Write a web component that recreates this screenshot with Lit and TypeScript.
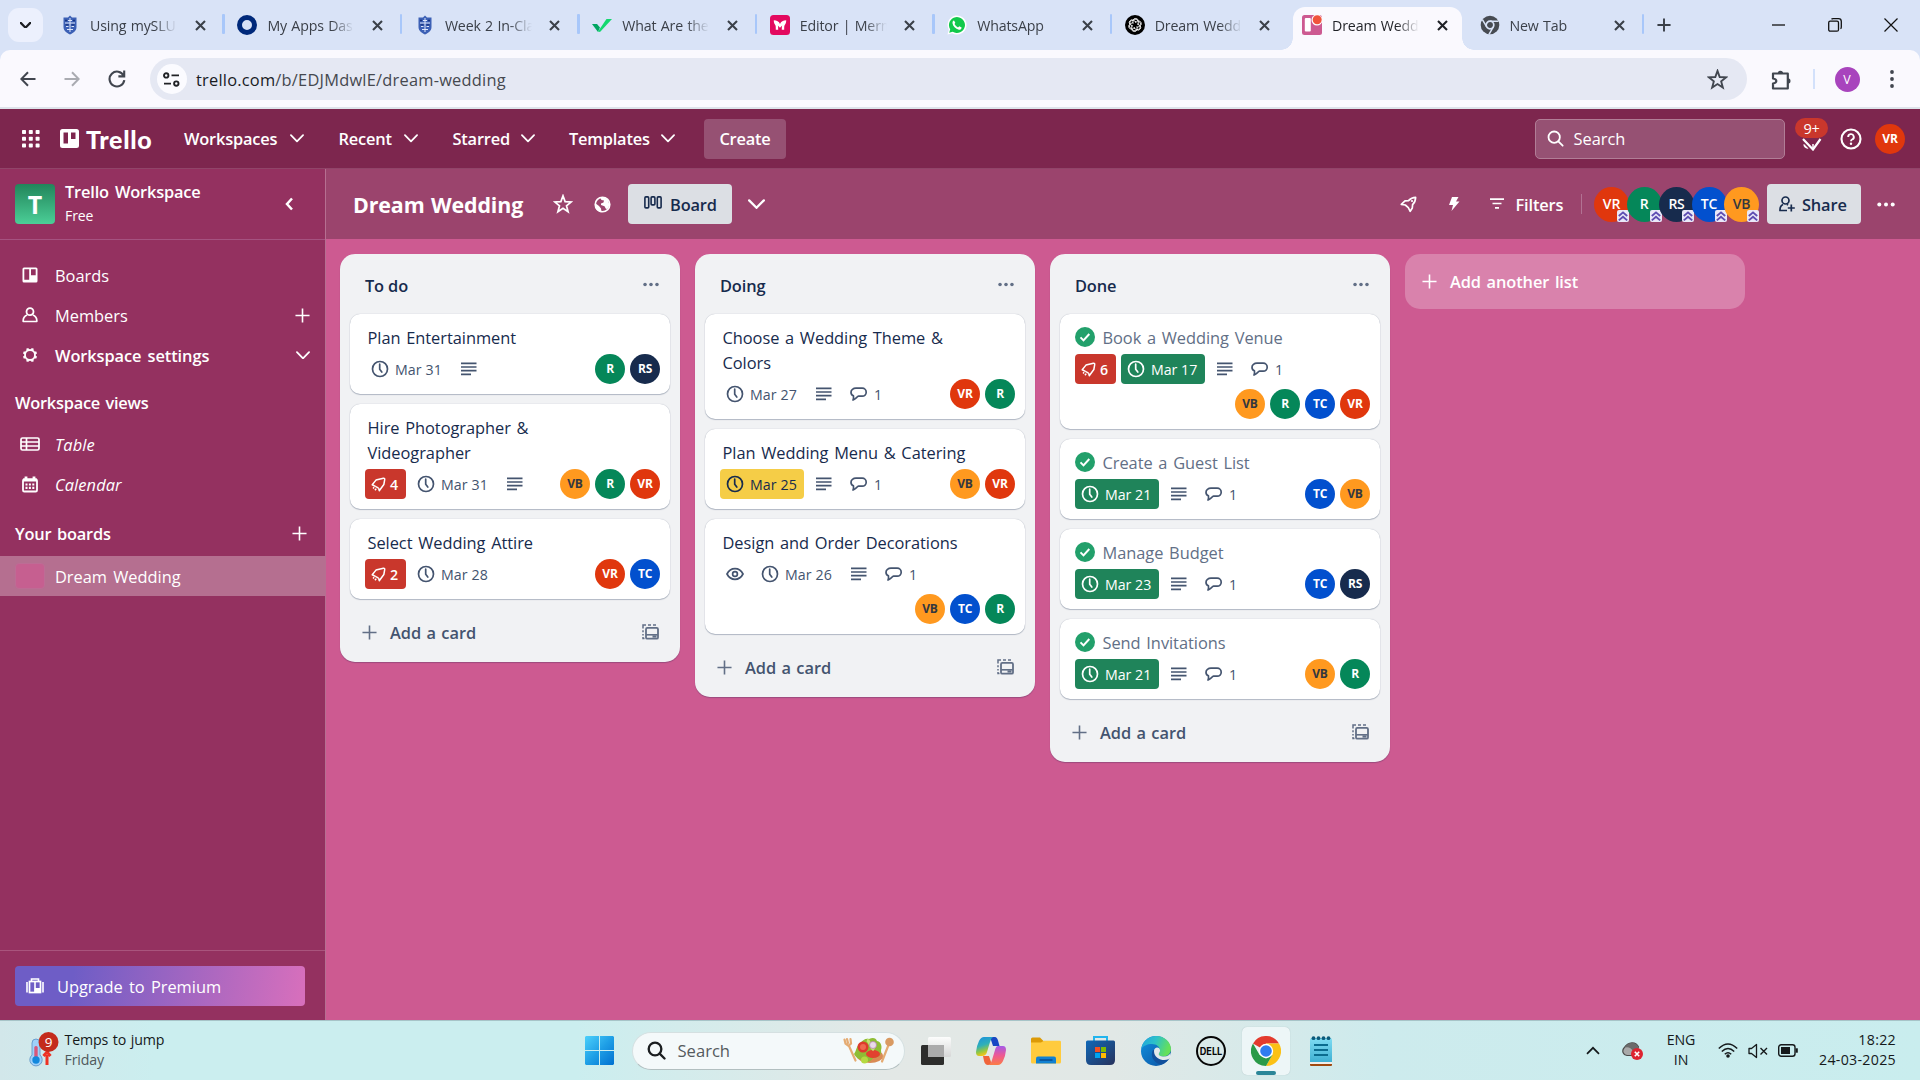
import { LitElement, html, css, svg, nothing, TemplateResult } from "lit";
import { customElement, property } from "lit/decorators.js";
import { classMap } from "lit/directives/class-map.js";

type Pic = TemplateResult;

const icon = (w: number, h: number, vb: string, body: unknown, cls = ""): Pic => html`<svg
  class="ico ${cls}" width=${w} height=${h} viewBox=${vb} fill="none" stroke="currentColor"
>${body}</svg>`;

const chevronDown = (w = 15, s = 2) =>
  icon(w, w * 0.6, "0 0 15 9", svg`<path d="M1 1.2 7.5 7.8 14 1.2" stroke-width=${s} stroke-linecap="round" stroke-linejoin="round"/>`);
const plus = (size: number, s = 2) =>
  icon(size, size, "0 0 16 16", svg`<path d="M8 .5v15M.5 8h15" stroke-width=${s}/>`);
const dots = (w: number) =>
  icon(w, 5, "0 0 18 5", svg`<g fill="currentColor" stroke="none"><circle cx="2.3" cy="2.5" r="2"/><circle cx="9" cy="2.5" r="2"/><circle cx="15.7" cy="2.5" r="2"/></g>`);
const star = (size: number, s = 1.8) =>
  icon(size, size, "0 0 20 20", svg`<path d="M10 1.8 12.1 7.600 18.3 7.9 13.5 11.8 15.1 17.7 10 14.3 4.9 17.7 6.5 11.8 1.7 7.9 7.9 7.600Z" stroke-width=${s} stroke-linejoin="miter"/>`);
const clock = icon(20, 20, "0 0 20 20", svg`<circle cx="10" cy="10" r="7.5" stroke-width="1.7"/><path d="M9.7 5.2V10.3L11.8 13" stroke-width="1.7" stroke-linecap="round"/>`);
const lines = icon(16, 14, "0 0 16 14", svg`<path d="M0 1.3h15.5M0 5h15.5M0 8.7h15.5M0 12.4h10" stroke-width="1.7"/>`);
const bubble = icon(20, 20, "0 0 20 20", svg`<path d="M7 4.2h6.2a4 4 0 0 1 0 8H9.6C8 12.4 7.2 14.6 4 16c.8-1.700.6-3.300.4-4.200C2.300 10.900 2 9.300 2 8.200 2 5.800 4.200 4.200 7 4.200Z" stroke-width="1.700" stroke-linejoin="round"/>`);
const eye = icon(20, 20, "0 0 20 20", svg`<path d="M2 10c1.600-3.200 4.400-5.300 8-5.300s6.400 2.100 8 5.300c-1.600 3.200-4.400 5.300-8 5.300S3.600 13.200 2 10Z" stroke-width="1.700"/><circle cx="10" cy="10" r="2.400" stroke-width="1.700"/>`);
const rocket = (s: number) => icon(s, s, "0 0 16 16", svg`<path d="M5.200 10.300 1.300 8.300 5.300 3.300 13.200 1.300Q14.900 1 14.600 2.800L13.700 8 8.800 14.600 8.100 11.800" stroke-width="1.600" stroke-linejoin="round"/><path d="M5.200 10.300l2.900 1.500M3.300 11l-1.100 1.300M5.600 12.400l-1.400 1.700" stroke-width="1.600"/>`);
const launch = icon(17, 17, "0 0 17 17", svg`<path d="M1.300 8.300 5 4.900 8.500 4.600Q11.500 1.300 15.600 1.300 15.700 5.500 12.600 8.700L12.300 12 10.200 15.400 8.300 11.600 5.300 9Z" stroke-width="1.700" stroke-linejoin="round"/><circle cx="12" cy="5" r="1.100" fill="currentColor" stroke="none"/>`);
const template = icon(17, 17, "0 0 17 17", svg`<path d="M1 11.500V10M1 8.200V6.200M1 4.500V1H4M6 1h3M11 1h3M1 13v1.500h1.500" stroke-width="1.500"/><rect x="4" y="3.900" width="12" height="10.800" rx="1.300" stroke-width="1.800"/><path d="M4 10.800h12" stroke-width="1.600"/><path d="M10.500 12.500h4" stroke-width="2.200"/>`);
const doneCheck = html`<svg class="ico" width="20" height="20" viewBox="0 0 20 20"><circle cx="10" cy="10" r="10" fill="#22a06b"/><path d="M5.500 10.400 8.500 13.400 14.300 7" fill="none" stroke="#fff" stroke-width="2"/></svg>`;
const boardGlyph = (s: number) => html`<svg class="ico" width=${s} height=${s} viewBox="0 0 16 16"><path fill="currentColor" fill-rule="evenodd" d="M2 .500h12A1.500 1.500 0 0 1 15.500 2v12a1.500 1.500 0 0 1-1.500 1.500H2A1.500 1.500 0 0 1 .500 14V2A1.500 1.500 0 0 1 2 .500ZM2.300 2.200v10.600H7.200V2.200ZM9 2.200V8.300h4.700V2.200Z"/></svg>`;
const closeX = icon(11, 11, "0 0 11 11", svg`<path d="M1 1l9 9M10 1l-9 9" stroke-width="2.100"/>`);
const search = (s: number, w = 2) => icon(s, s, "0 0 18 18", svg`<circle cx="7.600" cy="7.600" r="6" stroke-width=${w}/><path d="M12 12l4.600 4.600" stroke-width=${w} stroke-linecap="round"/>`);

const shield = html`<svg class="ico" width="20" height="20" viewBox="0 0 20 20"><path d="M10 .500 12 2.500H16.500V12c0 4-3.500 6-6.500 7.500C7 18 3.500 16 3.500 12V2.500H8Z" fill="#3c60b5"/><path d="M5 8h10M10 3v14M6 11.500h2.500M11.500 11.500H14M7 14.500h6M8 5.500h4" stroke="#dde6fa" stroke-width="1"/><path d="M5 5.500h2M13 5.500h2M5.500 9.800h3M11.500 9.800h3" stroke="#16327f" stroke-width="1.300"/></svg>`;
const chromeMark = (s: number, a: string, b: string, c: string, hub: string, ring = "#fff") => html`<svg class="ico" width=${s} height=${s} viewBox="0 0 30 30">
  <path d="M15 15 2 7.500A15 15 0 0 1 28 7.500H15Z" fill=${a}/><path d="M15 7.500H28A15 15 0 0 1 15 30L21.500 18.500Z" fill=${c}/><path d="M2 7.500 8.500 18.700 15 22.500 21.500 18.700 15 30A15 15 0 0 1 2 7.500Z" fill=${b}/>
  <circle cx="15" cy="15" r="7.200" fill=${ring}/><circle cx="15" cy="15" r="5.800" fill=${hub}/></svg>`;
const chromeMono = html`<svg class="ico" width="20" height="20" viewBox="0 0 20 20"><circle cx="10" cy="10" r="9.300" fill="#474b52"/><circle cx="10" cy="10" r="3.800" fill="none" stroke="#d9e3f7" stroke-width="1.700"/><path d="M10 6.200H18.500M6.700 11.900 2.400 4.700M13.300 11.900 9 19.300" stroke="#d9e3f7" stroke-width="1.500"/></svg>`;

interface TabInfo { title: string; fav: Pic; active?: boolean; sep?: boolean; }

const tabs: TabInfo[] = [
  { title: "Using mySLU", sep: true, fav: html`<span class="white">${shield}</span>` },
  { title: "My Apps Das", sep: true, fav: icon(20, 20, "0 0 20 20", svg`<circle cx="10" cy="10" r="7.500" stroke="#00297a" stroke-width="5"/>`) },
  { title: "Week 2 In-Cla", sep: true, fav: shield },
  { title: "What Are the", sep: true, fav: html`<svg class="ico" width="20" height="20" viewBox="0 0 20 20"><path d="M0 9H5l3 3.500-2 4.500Z" fill="#00a562"/><path d="M6 16.500 14.500 4H20L8 17Z" fill="#13d86f"/></svg>` },
  { title: "Editor | Merm", sep: true, fav: html`<svg class="ico" width="20" height="20" viewBox="0 0 20 20"><rect width="20" height="20" rx="3.500" fill="#e3095f"/><path d="M3.800 5.300c3 0 5.200 1.200 6.200 3.700 1-2.500 3.200-3.700 6.200-3.700.1 2.500-.7 3.700-1.600 4.900-.4.700-.4 2-.4 4.600h-2.400c0-2.200 0-3.300.4-4.300L10 12.700 7.800 10.500c.4 1 .4 2.100.4 4.300H5.800c0-2.600 0-3.900-.4-4.600-.9-1.200-1.700-2.400-1.600-4.900Z" fill="#fff"/></svg>` },
  { title: "WhatsApp", sep: true, fav: html`<svg class="ico" width="20" height="20" viewBox="0 0 20 20"><path d="M.5 19.500 1.800 14.700A9.500 9.500 0 1 1 5.300 18.200Z" fill="#fff"/><path d="M2.200 17.800 3.200 14.300A8 8 0 1 1 5.700 16.800Z" fill="#12c94b"/><path d="M7 5.500 8.300 7.800 7.500 9q1.200 2.300 3.500 3.400l1.300-1.100 2.300 1.100c0 1.800-1.400 2.400-2.700 2.300C8.500 14 6 11.300 5.500 8.300 5.400 6.800 6 5.500 7 5.500Z" fill="#fff"/></svg>` },
  { title: "Dream Weddi", fav: html`<svg class="ico" width="20" height="20" viewBox="0 0 20 20"><circle cx="10" cy="10" r="10" fill="#000"/><g fill="none" stroke="#fff" stroke-width=".8">${[0, 60, 120, 180, 240, 300].map((a) => svg`<path transform="rotate(${a} 10 10)" d="M10 7.700 12.900 6a2.700 2.700 0 0 1 2.300 4.800L12 12.600M8.500 5.200a2.600 2.600 0 0 1 4.400.8"/>`)}</g></svg>` },
  { title: "Dream Weddi", active: true, fav: html`<svg class="ico" width="20" height="20" viewBox="0 0 20 20"><rect width="20" height="20" rx="2.500" fill="#cd5a91"/><rect x="2.800" y="3" width="6" height="13.500" rx="1" fill="#fff"/><circle cx="15" cy="5" r="5.500" fill="#fff"/><circle cx="15.200" cy="4.800" r="4.500" fill="#f0533c"/></svg>` },
  { title: "New Tab", sep: true, fav: chromeMono },
];

@customElement("browser-chrome")
export class BrowserChrome extends LitElement {
  static styles = css`
    :host { display: block; height: 109px; background: #d9e3f7; font-family: "Open Sans", "Noto Sans", sans-serif; color: #3b4049; }
    .ico { display: block; flex: none; }
    .strip { height: 50px; display: flex; align-items: center; padding-left: 8px; box-sizing: border-box; }
    .pick { width: 35px; height: 34px; border-radius: 11px; background: #ecf0fd; display: grid; place-items: center; margin-right: 4px; color: #1c1e22; }
    .tab { width: 177.450px; height: 50px; box-sizing: border-box; display: flex; align-items: center; padding-left: 13px; position: relative; }
    .white { background: #fff; }
    .title { width: 87px; height: 22px; margin-left: 10px; padding-top: 1px; line-height: 22px; font-size: 14.200px; letter-spacing: -.15px; word-spacing: .8px; white-space: nowrap; overflow: hidden; mask-image: linear-gradient(90deg, #000 74%, transparent 100%); }
    .tab > .x { margin-left: 17.500px; }
    .sep { position: absolute; right: -.5px; top: 14px; width: 2.500px; height: 20px; background: #a8c7fa; border-radius: 1px; }
    .active { color: #1f2126; }
    .active::before { content: ""; position: absolute; z-index: 0; inset: 7px 5px 0 3.500px; background: #faf9fe; border-radius: 12px 12px 0 0; }
    .active::after { content: ""; position: absolute; left: -8.500px; right: -7px; bottom: 0; height: 12px; background: radial-gradient(circle at 0 0, transparent 11.500px, #faf9fe 12px) left / 12px 12px no-repeat, radial-gradient(circle at 100% 0, transparent 11.500px, #faf9fe 12px) right / 12px 12px no-repeat; }
    .active > * { z-index: 1; position: relative; }
    .new { margin-left: 13px; }
    .win { margin-left: auto; display: flex; align-items: center; gap: 42.500px; margin-right: 22px; color: #111; }
    .bar { height: 57px; box-sizing: border-box; padding: 8px 26px 7px 0; background: #faf9fe; border-radius: 10px 10px 0 0; display: flex; align-items: center; color: #41464f; }
    .nav { width: 150px; display: flex; padding-left: 20px; box-sizing: border-box; gap: 28px; align-items: center; }
    .dim { color: #a9abb1; }
    .omni { width: 1597px; height: 42px; background: #e5e8f3; border-radius: 21px; display: flex; align-items: center; box-sizing: border-box; padding: 0 19px 0 7px; }
    .site { width: 30px; height: 30px; border-radius: 50%; background: #fbfbff; display: grid; place-items: center; margin-right: 9px; color: #202226; }
    .url { flex: 1; font-size: 16.400px; color: #45484f; letter-spacing: .23px; }
    .url b { font-weight: 400; color: #191b1f; }
    .ext { margin-left: 24px; }
    .rule { width: 2px; height: 20px; background: #d3e1fb; margin: 0 20px 0 21px; }
    .who { width: 25px; height: 25px; border-radius: 50%; background: #a844bd; color: #fff; display: grid; place-items: center; font-size: 12.500px; margin-right: 30.500px; }
    .edge { height: 2px; background: #dde3ea; }
  `;
  render() {
    return html`
      <div class="strip">
        <div class="pick">${chevronDown(11, 3)}</div>
        ${tabs.map((t) => html`<div class=${classMap({ tab: true, active: !!t.active })}>
          <span class="fav">${t.fav}</span><span class="title">${t.title}</span><span class="x">${closeX}</span>
          ${t.sep ? html`<i class="sep"></i>` : nothing}</div>`)}
        <span class="new">${plus(14, 2.200)}</span>
        <div class="win">
          ${icon(13, 13, "0 0 13 13", svg`<path d="M0 6h13" stroke-width="1.300"/>`)}
          ${icon(14, 14, "0 0 14 14", svg`<rect x=".700" y="3.200" width="9.800" height="10" rx="1.500" stroke-width="1.300"/><path d="M3.500 1.200Q4 .700 5 .700H10.500Q13.300.700 13.300 3.500V9Q13.300 10.300 12.500 10.800" stroke-width="1.300"/>`)}
          ${icon(14, 14, "0 0 14 14", svg`<path d="M.5.5l13 13M13.500.5l-13 13" stroke-width="1.200"/>`)}
        </div>
      </div>
      <div class="bar">
        <div class="nav">
          ${icon(16, 16, "0 0 16 16", svg`<path d="M15.500 8H1.500M8 1.300 1.300 8 8 14.700" stroke-width="2"/>`)}
          <span class="dim">${icon(16, 16, "0 0 16 16", svg`<path d="M.5 8h14M8 1.300 14.700 8 8 14.700" stroke-width="2"/>`)}</span>
          ${icon(18, 18, "0 0 17 17", svg`<path d="M14.800 5.500A7 7 0 1 0 15.400 9.500M15.300 .500V6H9.800" stroke-width="2"/>`)}
        </div>
        <div class="omni">
          <span class="site">${icon(17, 15, "0 0 17 15", svg`<circle cx="3.200" cy="3.400" r="2.200" stroke-width="1.900"/><path d="M8.500 3.400h7.500M1 11.600h7" stroke-width="1.900"/><circle cx="13.300" cy="11.600" r="2.200" stroke-width="1.900"/>`)}</span>
          <span class="url"><b>trello.com</b>/b/EDJMdwlE/dream-wedding</span>
          ${star(21, 1.800)}
        </div>
        <span class="ext">${icon(21, 21, "0 0 21 21", svg`<path d="M2 4.500H16.800V19.500H2V14.500Q5.300 14 5.300 12T2 9.500Z" stroke-width="2.200" stroke-linejoin="round"/><path d="M6.700 4.500a2.700 2.700 0 0 1 5.400 0ZM16.800 9.300a2.700 2.700 0 0 1 0 5.400Z" fill="currentColor" stroke="none"/>`)}</span>
        <i class="rule"></i><span class="who">V</span>
        ${icon(4, 18, "0 0 4 18", svg`<g fill="currentColor" stroke="none"><circle cx="2" cy="2" r="1.900"/><circle cx="2" cy="9" r="1.900"/><circle cx="2" cy="16" r="1.900"/></g>`)}
      </div>
      <div class="edge"></div>`;
  }
}

@customElement("member-avatar")
export class MemberAvatar extends LitElement {
  static styles = css`
    :host { display: block; flex: none; }
    .av { display: grid; place-items: center; border-radius: 50%; color: #fff; font: 700 12px/1 "Open Sans", "Noto Sans", sans-serif; letter-spacing: -.2px; position: relative; }
    .s30 { width: 30px; height: 30px; }
    .s35 { width: 35px; height: 35px; font-size: 14px; font-weight: 600; }
    .VR { background: #e0370d; } .R { background: #058759; } .RS { background: #172b4d; } .TC { background: #0250ce; }
    .VB { background: #ff991f; color: #33373f; }
    .admin { position: absolute; right: 0; bottom: 0; display: block; }
  `;
  @property() who = "";
  @property({ type: Number }) size = 30;
  @property({ type: Boolean }) admin = false;
  render() {
    return html`<div class="av s${this.size} ${this.who}">${this.who}
      ${this.admin ? html`<svg class="admin" width="12" height="12" viewBox="0 0 12 12"><rect width="12" height="12" rx="2" fill="#e9e8f8"/><path d="M1.800 6 6 2.400 10.200 6M1.800 10.400 6 6.800l4.200 3.600" fill="none" stroke="#5e4db2" stroke-width="1.900"/></svg>` : nothing}</div>`;
  }
}

@customElement("trello-header")
export class TrelloHeader extends LitElement {
  static styles = css`
    :host { display: flex; align-items: center; height: 60px; box-sizing: border-box; background: #7d264e; border-bottom: 1px solid #914469; padding: 0 15px 0 22px; color: #fff; font: 600 16.400px/24px "Open Sans", "Noto Sans", sans-serif; letter-spacing: -.2px; }
    .ico { display: block; flex: none; }
    .logo { display: flex; align-items: center; gap: 7px; margin-left: 20px; width: 124px; font: 900 25px/28px Lato, "Open Sans", sans-serif; letter-spacing: .65px; }
    nav { display: flex; gap: 34.500px; }
    .item { display: flex; align-items: center; justify-content: space-between; }
    .item span, .create, .find span { padding-top: 1px; }
    .create { width: 82px; height: 40px; box-sizing: border-box; margin-left: 29px; border-radius: 4px; background: #965173; display: grid; place-items: center; }
    .find { width: 250px; height: 40px; box-sizing: border-box; margin-left: auto; border: 1px solid #b17d96; border-radius: 5px; background: #965173; display: flex; align-items: center; gap: 10px; padding-left: 10.500px; font-weight: 400; letter-spacing: 0; }
    .bell { width: 33px; height: 40px; margin: 0 12px 0 10px; position: relative; display: flex; justify-content: center; align-items: flex-end; }
    .bell .ico { margin-bottom: 8px; }
    .count { position: absolute; left: 0; top: -1px; width: 33px; height: 20px; border-radius: 11px; background: #c9372c; font-weight: 400; font-size: 14.500px; line-height: 21px; text-align: center; }
    .me { margin-left: 13px; }
  `;
  render() {
    const items: [string, number][] = [["Workspaces", 120], ["Recent", 79.500], ["Starred", 82], ["Templates", 106]];
    return html`
      ${icon(18, 18, "0 0 18 18", svg`<g fill="currentColor" stroke="none">${[0, 6.800, 13.600].map((y) => [0, 6.800, 13.600].map((x) => svg`<rect x=${x} y=${y} width="4" height="4" rx=".8"/>`))}</g>`)}
      <div class="logo"><svg class="ico" width="19" height="19" viewBox="0 0 19 19"><path fill="#fff" fill-rule="evenodd" d="M2.500 0h14A2.500 2.500 0 0 1 19 2.500v14a2.500 2.500 0 0 1-2.500 2.500h-14A2.500 2.500 0 0 1 0 16.500v-14A2.500 2.500 0 0 1 2.500 0ZM3.500 3.500v11H8v-11ZM11 3.500v6.500h4.500v-6.500Z"/></svg>Trello</div>
      <nav>${items.map(([t, w]) => html`<span class="item" style="width:${w}px"><span>${t}</span>${chevronDown(14, 1.900)}</span>`)}</nav>
      <div class="create">Create</div>
      <div class="find">${search(17, 1.900)}<span>Search</span></div>
      <div class="bell"><span class="count">9+</span>${icon(20, 13, "0 0 20 13", svg`<path d="M1 1 11 11.500 18.500 1" stroke-width="2.200"/><path d="M1.500 6a4 4 0 0 0 5 4.500L2.500 6.500" fill="currentColor" stroke="none"/><path d="M11 11.500V6" stroke-width="1.500"/>`)}</div>
      ${icon(22, 22, "0 0 22 22", svg`<circle cx="11" cy="11" r="9.500" stroke-width="2.100"/><path d="M8.200 9a2.800 2.800 0 1 1 3.900 2.500q-1.100.500-1.100 1.800" stroke-width="1.900"/><circle cx="11" cy="15.800" r="1.200" fill="currentColor" stroke="none"/>`)}
      <member-avatar class="me" who="VR"></member-avatar>`;
  }
}

@customElement("workspace-sidebar")
export class WorkspaceSidebar extends LitElement {
  static styles = css`
    :host { display: flex; flex-direction: column; width: 326px; flex: none; box-sizing: border-box; background: #943160; border-right: 1px solid #b66f91; color: #fff; font: 400 16.400px/24px "Open Sans", "Noto Sans", sans-serif; letter-spacing: -.02px; word-spacing: 2px; }
    .ico { display: block; flex: none; }
    .space { height: 70px; flex: none; display: flex; align-items: center; padding: 0 31px 0 15px; border-bottom: 1px solid #a55280; gap: 10px; box-sizing: content-box; }
    .tile { width: 40px; height: 40px; border-radius: 4px; background: linear-gradient(#22855b, #4bce97); display: grid; place-items: center; font-size: 25px; font-weight: 700; }
    .name { flex: 1; font-weight: 600; line-height: 22px; letter-spacing: -.18px; }
    .name small { display: block; font-size: 14px; font-weight: 400; line-height: 24px; letter-spacing: -.1px; margin-top: 1px; }
    .menu { flex: 1; padding-top: 15px; }
    .row { height: 40px; display: flex; align-items: center; padding: 0 15px 0 15px; }
    .lead { width: 30px; display: grid; place-items: center; margin-right: 10px; }
    .row span { flex: 1; padding-top: 1px; }
    .strong { font-weight: 600; letter-spacing: -.09px; }
    .head { height: 40px; margin: 7px 0 2px; padding-right: 18px; font-weight: 600; letter-spacing: -.250px; word-spacing: 1.500px; }
    .ital { font-style: italic; letter-spacing: .1px; }
    .boards { margin: 9px 0 3px; letter-spacing: -.2px; }
    .sel { background: #b56f90; }
    .chip { width: 30px; height: 26px; border-radius: 4px; background: #c65f90; border: 1px solid #bd6c95; margin-right: 10px; box-sizing: border-box; }
    .foot { height: 70px; flex: none; border-top: 1px solid #a9547d; padding: 15px 20px 0 15px; box-sizing: border-box; }
    .up { height: 40px; border-radius: 4px; width: 290px; box-sizing: border-box; background: linear-gradient(100deg, #6e5dc6 20%, #d66fbc 98%); display: flex; align-items: center; gap: 13px; padding-left: 11px; }
    .up span { padding-top: 2px; }
  `;
  render() {
    const member = icon(16, 16, "0 0 16 16", svg`<circle cx="8" cy="4.700" r="3.500" stroke-width="1.800"/><path d="M5.200 8C2.500 9 1 11.500 1.200 14.500H14.800C15 11.500 13.500 9 10.800 8" stroke-width="1.700" stroke-linejoin="round"/>`);
    const gear = icon(16, 16, "0 0 17 17", svg`<circle cx="8.500" cy="8.500" r="5.300" stroke-width="2"/>${[0, 45, 90, 135, 180, 225, 270, 315].map((a) => svg`<path transform="rotate(${a + 22.500} 8.500 8.500)" d="M8.500 3V.900" stroke-width="2.600"/>`)}`);
    const table = icon(20, 14, "0 0 20 14", svg`<rect x="1" y="1" width="18" height="12" rx="1.500" stroke-width="1.700"/><path d="M1 5h18M1 9h18M6.500 1v12" stroke-width="1.700"/>`);
    const cal = icon(16, 17, "0 0 16 17", svg`<rect x="1" y="3.500" width="14" height="12" rx="1.300" stroke-width="1.800"/><path d="M1 4h14M4 .500v3M12 .500v3" stroke-width="2.800"/><path d="M3.500 8.500h9M3.500 11.800h9" stroke-width="2.200" stroke-dasharray="2 1.400"/>`);
    return html`
      <div class="space"><span class="tile">T</span><div class="name">Trello Workspace<small>Free</small></div>
        ${icon(9, 14, "0 0 9 14", svg`<path d="M7 1.500 2 7l5 5.500" stroke-width="2.500"/>`)}</div>
      <div class="menu">
        <div class="row"><i class="lead">${boardGlyph(16)}</i><span>Boards</span></div>
        <div class="row"><i class="lead">${member}</i><span>Members</span>${plus(15, 1.700)}</div>
        <div class="row strong"><i class="lead">${gear}</i><span>Workspace settings</span>${chevronDown(14, 1.900)}</div>
        <div class="row head"><span>Workspace views</span></div>
        <div class="row ital"><i class="lead">${table}</i><span>Table</span></div>
        <div class="row ital"><i class="lead">${cal}</i><span>Calendar</span></div>
        <div class="row head boards"><span>Your boards</span>${plus(15, 1.700)}</div>
        <div class="row sel"><i class="chip"></i><span>Dream Wedding</span></div>
      </div>
      <div class="foot"><div class="up">
        ${icon(18, 16, "0 0 18 16", svg`<path d="M5.500 3V1h7v2" stroke-width="1.600"/><rect x="3.500" y="3.500" width="11" height="11" stroke-width="1.700"/><path d="M1 4v10.500M17 4v10.500M9 4v10" stroke-width="1.600"/><path d="M9 10.500h5.500V14H9Z" fill="currentColor"/>`)}
        <span>Upgrade to Premium</span></div></div>`;
  }
}

interface Badge { kind: "power" | "date" | "desc" | "talk" | "watch"; text?: string; tone?: string; }
interface Card { title: string; done?: boolean; badges: Badge[]; members: string[]; }
interface List { name: string; cards: Card[]; }

const desc: Badge = { kind: "desc" };
const talk: Badge = { kind: "talk", text: "1" };
const date = (text: string, tone = ""): Badge => ({ kind: "date", text, tone });
const power = (text: string): Badge => ({ kind: "power", text, tone: "red" });

const lists: List[] = [
  { name: "To do", cards: [
    { title: "Plan Entertainment", badges: [date("Mar 31"), desc], members: ["R", "RS"] },
    { title: "Hire Photographer & Videographer", badges: [power("4"), date("Mar 31"), desc], members: ["VB", "R", "VR"] },
    { title: "Select Wedding Attire", badges: [power("2"), date("Mar 28")], members: ["VR", "TC"] },
  ] },
  { name: "Doing", cards: [
    { title: "Choose a Wedding Theme & Colors", badges: [date("Mar 27"), desc, talk], members: ["VR", "R"] },
    { title: "Plan Wedding Menu & Catering", badges: [date("Mar 25", "yellow"), desc, talk], members: ["VB", "VR"] },
    { title: "Design and Order Decorations", badges: [{ kind: "watch" }, date("Mar 26"), desc, talk], members: ["VB", "TC", "R"] },
  ] },
  { name: "Done", cards: [
    { title: "Book a Wedding Venue", done: true, badges: [power("6"), date("Mar 17", "green"), desc, talk], members: ["VB", "R", "TC", "VR"] },
    { title: "Create a Guest List", done: true, badges: [date("Mar 21", "green"), desc, talk], members: ["TC", "VB"] },
    { title: "Manage Budget", done: true, badges: [date("Mar 23", "green"), desc, talk], members: ["TC", "RS"] },
    { title: "Send Invitations", done: true, badges: [date("Mar 21", "green"), desc, talk], members: ["VB", "R"] },
  ] },
];

@customElement("board-list")
export class BoardList extends LitElement {
  static styles = css`
    :host { display: block; width: 340px; flex: none; box-sizing: border-box; padding: 0 10px; background: #f1f2f4; border-radius: 15px; box-shadow: 0 1px 1px #091e4240; color: #172b4d; font: 400 16.400px/25px "Open Sans", "Noto Sans", sans-serif; }
    .ico { display: block; flex: none; }
    .head { height: 60px; display: flex; align-items: center; justify-content: space-between; padding: 0 11.500px 0 15px; font-weight: 600; letter-spacing: -.15px; }
    .head span { padding-top: 2px; }
    .head .ico, .foot .ico { color: #626f86; }
    .cards { display: flex; flex-direction: column; gap: 10px; }
    .card { background: #fff; border-radius: 10px; padding: 10px 10px 10px 15px; box-shadow: 0 1px 1px #091e4240, 0 0 1px #091e424f; }
    .title { width: 246px; display: flex; gap: 7.500px; padding-left: 2.500px; letter-spacing: -.04px; word-spacing: 1.500px; margin-bottom: 5px; }
    .title .ico { margin: 3px 0 0 -2.500px; }
    .title span { position: relative; top: 1px; }
    .fin { color: #626f86; }
    .meta { display: flex; flex-wrap: wrap; gap: 5px; }
    .b { height: 30px; box-sizing: border-box; border-radius: 4px; display: flex; align-items: center; padding: 0 5px; color: #44546f; font-size: 14.200px; gap: 5px; }
    .date { width: 84px; white-space: nowrap; letter-spacing: .08px; }
    .desc { width: 30px; padding-left: 7px; }
    .watch { width: 30px; }
    .talk { width: 50px; gap: 5px; }
    .power { width: 41px; gap: 4px; padding-left: 6px; }
    .red { background: #c9372c; color: #fff; font-weight: 600; }
    .green { background: #1f845a; color: #fff; font-weight: 500; letter-spacing: -.02px; }
    .yellow { background: #f5cd47; color: #172b4d; }
    .people { margin-left: auto; display: flex; gap: 5px; }
    .foot { height: 63px; padding: 3px 11.500px 0 12px; box-sizing: border-box; display: flex; align-items: center; color: #44546f; font-weight: 600; letter-spacing: 0; word-spacing: 1px; }
    .foot span { flex: 1; margin-left: 13px; padding-top: 1px; }
  `;
  @property({ attribute: false }) list!: List;
  private badge(b: Badge) {
    const art = { power: rocket(15), date: clock, desc: lines, talk: bubble, watch: eye }[b.kind];
    return html`<div class="b ${b.kind} ${b.tone ?? ""}">${art}${b.text ?? nothing}</div>`;
  }
  render() {
    return html`
      <div class="head"><span>${this.list.name}</span>${dots(16)}</div>
      <div class="cards">${this.list.cards.map((c) => html`<div class="card">
        <div class=${classMap({ title: true, fin: !!c.done })}>${c.done ? doneCheck : nothing}<span>${c.title}</span></div>
        <div class="meta">${c.badges.map((b) => this.badge(b))}
          <div class="people">${c.members.map((m) => html`<member-avatar who=${m}></member-avatar>`)}</div></div>
      </div>`)}</div>
      <div class="foot">${plus(15, 1.700)}<span>Add a card</span>${template}</div>`;
  }
}

@customElement("board-view")
export class BoardView extends LitElement {
  static styles = css`
    :host { display: flex; flex-direction: column; flex: 1; min-width: 0; background: #cd5a91; color: #fff; font: 600 16.400px/24px "Open Sans", "Noto Sans", sans-serif; letter-spacing: -.15px; }
    .ico { display: block; flex: none; }
    .top { height: 70px; box-sizing: border-box; background: #9b446d; display: flex; align-items: center; padding: 0 25px 0 27px; }
    h1 { margin: 0; width: 200px; padding-top: 2px; font: 700 21.400px/30px "Open Sans", "Noto Sans", sans-serif; letter-spacing: -.12px; word-spacing: 1px; }
    .globe { margin: 0 17px 0 21px; }
    .btn { height: 40px; box-sizing: border-box; border-radius: 4px; background: #dcdfe4; color: #172b4d; display: flex; align-items: center; gap: 8px; }
    .btn span, .filters { padding-top: 2px; }
    .view { width: 104px; padding-left: 16px; margin-right: 15.500px; }
    .view .ico { margin-bottom: 3px; }
    .right { margin-left: auto; display: flex; align-items: center; }
    .bolt { margin: 0 30px 0 31px; }
    .filters { width: 56.500px; margin-left: 12px; }
    .rule { width: 1px; height: 20px; background: #b27293; margin: 0 12px 0 9px; }
    .faces { display: flex; margin-right: 8px; }
    .faces member-avatar + member-avatar { margin-left: -2.500px; }
    .share { width: 94px; padding-left: 12px; gap: 7px; margin-right: 16px; }
    .lists { display: flex; align-items: flex-start; gap: 15px; padding: 15px 0 0 14px; }
    .more { width: 340px; height: 55px; box-sizing: border-box; border-radius: 15px; background: #d982ac; display: flex; align-items: center; gap: 13px; padding-left: 17px; letter-spacing: -.1px; word-spacing: 1.500px; }
    .more span { padding-top: 1px; }
  `;
  render() {
    return html`
      <div class="top">
        <h1>Dream Wedding</h1>
        ${star(20, 1.700)}
        <svg class="ico globe" width="17" height="17" viewBox="0 0 17 17"><circle cx="8.500" cy="8.500" r="7.300" fill="none" stroke="#fff" stroke-width="1.600"/><path d="M1 7 5 10 7 12.500l.5 4C3 15.500 1 12 1 8.500ZM6 1.500 8.500 1 13.500 3 15.500 9 14 12.500 12 13 10.500 10.300 7 9 7 7.500 9.500 6.500 10 4.500 7.500 4Z" fill="#fff"/></svg>
        <div class="btn view">${icon(18, 13, "0 0 18 13", svg`<rect x=".9" y=".9" width="3.800" height="11" rx="1" stroke-width="1.600"/><rect x="7.100" y=".9" width="3.800" height="8" rx="1" stroke-width="1.600"/><rect x="13.300" y=".9" width="3.800" height="11" rx="1" stroke-width="1.600"/>`)}<span>Board</span></div>
        ${chevronDown(17, 2)}
        <div class="right">
          ${launch}
          <svg class="ico bolt" width="12" height="14" viewBox="0 0 12 14"><path d="M4 0H10.500L8 4.500H11.500L3.500 14 5 8H1Z" fill="#fff"/></svg>
          ${icon(14, 12, "0 0 14 12", svg`<path d="M0 1.200h14M2.500 5.500h9M5 9.800h4" stroke-width="1.700"/>`)}
          <span class="filters">Filters</span><i class="rule"></i>
          <div class="faces">${["VR", "R", "RS", "TC", "VB"].map((m) => html`<member-avatar who=${m} size="35" admin></member-avatar>`)}</div>
          <div class="btn share">${icon(16, 16, "0 0 16 16", svg`<circle cx="6.500" cy="4.500" r="3.500" stroke-width="1.700"/><path d="M4 8.500C1.500 9.500.9 12 1 14.500H8M8 8.300l1 .9M12.300 8.500v7M8.800 12h7" stroke-width="1.700"/>`)}<span>Share</span></div>
          ${dots(18)}
        </div>
      </div>
      <div class="lists">${lists.map((l) => html`<board-list .list=${l}></board-list>`)}<div class="more">${plus(15, 1.700)}<span>Add another list</span></div></div>`;
  }
}

@customElement("task-bar")
export class TaskBar extends LitElement {
  static styles = css`
    :host { display: flex; align-items: center; height: 60px; box-sizing: border-box; border-top: 1px solid #a7c4c8; padding: 0 24px 0 28px; font: 400 14.200px/20px "Open Sans", "Noto Sans", sans-serif; letter-spacing: -.15px; color: #15191b; background: linear-gradient(90deg, #d2e7ea, #cbeeef 8%, #cbeeef 30%, #e3e8e6 46%, #e1e8e6 58%, #cdebed 72%, #c9edee); }
    .ico, svg { display: block; flex: none; }
    .weather { width: 549px; display: flex; align-items: center; gap: 5.500px; word-spacing: 1.200px; }
    .weather > div { margin-top: -2px; }
    .sub { color: #50595c; }
    .pill { width: 273px; height: 38px; box-sizing: border-box; border-radius: 20px; background: #f4f9fa; border: 1px solid #d5e0e1; border-bottom-color: #b2bfc0; display: flex; align-items: center; padding: 0 9px 0 14px; margin: 0 3px 0 10px; font-size: 16.600px; color: #555b5e; gap: 11.500px; letter-spacing: 0; }
    .pill span { flex: 1; }
    .pill .ico { color: #1b1e20; }
    .slot { width: 55px; height: 48px; display: grid; place-items: center; flex: none; }
    .start { width: 45px; }
    .on { position: relative; z-index: 0; }
    .on::before { content: ""; position: absolute; z-index: -1; inset: 0 3.500px; background: #edf6f7; border-radius: 5px; box-shadow: 0 0 1px #9fb6b8; }
    .on::after { content: ""; position: absolute; bottom: 0; left: 17.500px; width: 20px; height: 4px; border-radius: 2px; background: #2b8698; }
    .tray { margin-left: auto; display: flex; align-items: center; }
    .cloud { margin-left: 22px; }
    .lang { text-align: center; width: 40px; margin: -1px 17px 0 18px; }
    .sys { display: flex; align-items: center; gap: 10px; }
    .time { text-align: right; width: 98px; margin-top: -2px; white-space: nowrap; letter-spacing: .3px; }
  `;
  render() {
    return html`
      <div class="weather">
        <svg width="31" height="38" viewBox="0 0 31 38"><path d="M4 11a4 4 0 0 1 8 0V23a6.200 6.200 0 1 1-8 0Z" fill="#9fd0fa" stroke="#5b8fc4" stroke-width=".8"/><rect x="6.300" y="14" width="3.400" height="12" rx="1.500" fill="#d9567a"/><circle cx="8" cy="28" r="3.700" fill="#1288dd"/><path d="M19 33V23M15.500 24 19 20l3.500 4" stroke="#ee3224" stroke-width="3" fill="none"/><circle cx="20.500" cy="10" r="10" fill="#c42b1c"/><text x="20.500" y="15" text-anchor="middle" font-size="13.500" fill="#fff">9</text></svg>
        <div><div>Temps to jump</div><div class="sub">Friday</div></div>
      </div>
      <div class="slot start"><svg width="29" height="29" viewBox="0 0 29 29"><defs><linearGradient id="w" x1="0" y1="0" x2="1" y2="1"><stop stop-color="#4cd0fb"/><stop offset=".5" stop-color="#1f9fe6"/><stop offset="1" stop-color="#0070d0"/></linearGradient></defs><path d="M1 0H14V14H0V1ZM15 0H28L29 1V14H15ZM0 15H14V29H1L0 28ZM15 15H29V28L28 29H15Z" fill="url(#w)"/></svg></div>
      <div class="pill">${search(19, 2.200)}<span>Search</span>
        <svg width="52" height="27" viewBox="0 0 52 27"><g stroke="#e5ab72" stroke-width="2.200" fill="none" stroke-linecap="round"><path d="M6 9l6.500 14.500M1.500 2.500l1 4 3 2.300 2.500-2.300-.5-4.500M4 2l1 4"/><path d="M45.500 8 39 24.500"/></g><circle cx="46.500" cy="5" r="4.300" fill="#d99a62"/><ellipse cx="27" cy="19" rx="13" ry="7" fill="#d98b55"/><path d="M11 17c3-4 2-8 6-10 2-4 6-6 9-5 4-2 7-1 8 2 5 1 5 7 4 9 1 5-3 8-8 8-3 5-9 5-11 1-4 1-6-2-8-5Z" fill="#8fbd35"/><circle cx="20" cy="10" r="5.500" fill="#dd3b2c"/><circle cx="20" cy="10" r="3" fill="#f0694f"/><ellipse cx="30" cy="17" rx="7" ry="4" fill="#e2412f"/><path d="M24 3c3 1 3 7 7 10" stroke="#c9e072" stroke-width="3" fill="none"/><circle cx="30" cy="8" r="3.500" fill="#eadbe8" stroke="#b577b0" stroke-width=".7"/><circle cx="21.500" cy="23" r="3.500" fill="#b4da42"/></svg></div>
      <div class="slot"><svg width="30" height="28" viewBox="0 0 30 28"><defs><linearGradient id="tv" x2="0" y2="1"><stop stop-color="#fff"/><stop offset="1" stop-color="#d5d5d5"/></linearGradient></defs><rect y="8" width="23" height="20" rx="1.500" fill="#2d2d2c"/><rect x="7" y="0" width="23" height="20" rx="1.500" fill="url(#tv)" opacity=".9"/><path d="M7 8H23V20H7Z" fill="#ababab"/></svg></div>
      <div class="slot"><svg width="30" height="28" viewBox="0 0 30 28"><defs><linearGradient id="c1" x2=".3" y2="1"><stop stop-color="#1a8fe0"/><stop offset=".5" stop-color="#2fb0b8"/><stop offset=".8" stop-color="#9bc83c"/><stop offset="1" stop-color="#f5c518"/></linearGradient><linearGradient id="c2" x2="0" y2="1"><stop stop-color="#a45ae8"/><stop offset=".5" stop-color="#ee5a93"/><stop offset="1" stop-color="#fb7d45"/></linearGradient></defs><path d="M14 0H19Q21 0 22 3.500L23.500 9H17Z" fill="#1847c4"/><path d="M8 0H17Q15 1 14 5L11 15Q10 19 6 19H3Q0 19 0 15 .500 9 3 4 5 0 8 0Z" fill="url(#c1)"/><path d="M22 9H27Q30 9 30 13 29.500 19 27 24 25 28 22 28H13Q15 27 16 23L19 13Q20 9 22 9Z" fill="url(#c2)"/><path d="M7 19H13L15 25Q15 28 12 28 9 28 8 24Z" fill="#f0643a"/></svg></div>
      <div class="slot"><svg width="30" height="27" viewBox="0 0 30 27"><path d="M0 2Q0 .500 1.500.500H9L12.500 4H28V9H0Z" fill="#dc9a07"/><path d="M0 5.500H10L13 3.700H28.500Q30 3.700 30 5V25Q30 26.500 28.500 26.500H1.500Q0 26.500 0 25Z" fill="#ffcb3d"/><path d="M5 26.500V21.500Q5 19.500 7 19.500H23Q25 19.500 25 21.500V26.500Z" fill="#1181d2"/><path d="M8.500 23h13" stroke="#0a4f93" stroke-width="1.600"/></svg></div>
      <div class="slot"><svg width="29" height="29" viewBox="0 0 29 29"><defs><linearGradient id="st" x2="1" y2="1"><stop stop-color="#0f68b8"/><stop offset="1" stop-color="#28325c"/></linearGradient></defs><path d="M8 6V1H21V6" fill="none" stroke="#22b5ee" stroke-width="2"/><path d="M0 6Q0 4.500 1.500 4.500H27.500Q29 4.500 29 6V24Q29 29 24 29H5Q0 29 0 24Z" fill="url(#st)"/><path d="M9 11h5v5H9Z" fill="#f25022"/><path d="M15 11h5v5h-5Z" fill="#7fba00"/><path d="M9 17h5v5H9Z" fill="#00a4ef"/><path d="M15 17h5v5h-5Z" fill="#ffb900"/></svg></div>
      <div class="slot"><svg width="30" height="30" viewBox="0 0 30 30"><defs><linearGradient id="e1" x2="1" y2=".3"><stop stop-color="#1fa3e0"/><stop offset=".5" stop-color="#2dc1c9"/><stop offset="1" stop-color="#65e05a"/></linearGradient><linearGradient id="e2" x2="1" y2="1"><stop stop-color="#1193e0"/><stop offset="1" stop-color="#0b4fa0"/></linearGradient></defs><circle cx="15" cy="15" r="15" fill="url(#e2)"/><path d="M.200 13C1.500 5 8 0 15 0 24 0 30 6.500 30 13c0 5-4 7.500-8 7.500-3 0-4.500-1-4.500-2.200 0-1 1.500-1.800 1.500-4C19 11 15.500 8 11 8 6 8 2 10 .200 13Z" fill="url(#e1)"/><path d="M12 14c-3 5 0 13 8 14.500 4-1 7-3.500 8.500-6.500-3 1.600-11 2.500-13.500-2.500-1.200-3 .5-5 .5-5Z" fill="#11509c"/><path d="M13 15c0-3 3-4.500 5-3 1.500 1.500 1.300 3.500.2 5-.9 1.400-.6 3 3.800 3.500 4 .3 6.500-1.500 7.500-3.500L30 21l-2.500 2.300C22 25.500 13 23 13 15Z" fill="#e3e9ea"/></svg></div>
      <div class="slot"><svg width="30" height="30" viewBox="0 0 30 30"><circle cx="15" cy="15" r="14" fill="none" stroke="#060606" stroke-width="2"/><text x="15" y="18.700" text-anchor="middle" textLength="22.500" lengthAdjust="spacingAndGlyphs" font-size="10" font-weight="700" font-family="Inter, sans-serif" fill="#060606" letter-spacing="0">DELL</text></svg></div>
      <div class="slot on">${chromeMark(30, "#e33b2e", "#2a9a48", "#fbc116", "#2f7cf0")}</div>
      <div class="slot"><svg width="22" height="30" viewBox="0 0 22 30"><defs><linearGradient id="n" x2="0" y2="1"><stop stop-color="#7fdcf3"/><stop offset="1" stop-color="#3fb0d3"/></linearGradient></defs><rect y="25" width="22" height="5" rx="1" fill="#a0490f"/><rect y="24" width="22" height="4" fill="#f0eeea"/><path d="M0 4Q0 2 2 2H20Q22 2 22 4V26H0Z" fill="url(#n)"/><path d="M4 9h14M4 14h14M4 19h14" stroke="#0b6c8f" stroke-width="1.900"/><g fill="#0c5a7a"><circle cx="3.500" cy="2.200" r="1.900"/><circle cx="8.500" cy="2.200" r="1.900"/><circle cx="13.500" cy="2.200" r="1.900"/><circle cx="18.500" cy="2.200" r="1.900"/></g></svg></div>
      <div class="tray">
        ${icon(14, 9, "0 0 14 9", svg`<path d="M1 7.800 7 1.800l6 6" stroke-width="1.700"/>`)}
        <svg class="cloud" width="21" height="18" viewBox="0 0 21 18"><path d="M5 13.500A4.500 4.500 0 0 1 2 6Q5 1 10 .800 15 1 16.500 5L13 13.500Z" fill="#a9a9a9" stroke="#4a4a4a" stroke-width="1.200"/><path d="M3 5.500Q8 4 11 9L17 6Q15 1 10 .900 5 1 3 5.500Z" fill="#6b6b6b"/><circle cx="15" cy="12" r="6" fill="#dd2430"/><path d="M12.800 9.800l4.400 4.400M17.200 9.800l-4.400 4.400" stroke="#fff" stroke-width="1.600"/></svg>
        <div class="lang"><div>ENG</div><div>IN</div></div>
        <div class="sys">
          ${icon(20, 15, "0 0 20 15", svg`<path d="M.8 5.500Q10-3.500 19.200 5.500M3.800 8.500q6.200-6 12.400 0M6.800 11.300q3.200-3 6.400 0" stroke-width="1.500"/><circle cx="10" cy="13" r="1.800" fill="currentColor" stroke="none"/>`)}
          ${icon(20, 16, "0 0 20 16", svg`<path d="M1 5.500H3.500L8.500 1.500v13L3.500 10.500H1Z" stroke-width="1.300" stroke-linejoin="round"/><path d="M12.500 5l6.500 6.500M19 5l-6.500 6.500" stroke-width="1.400"/>`)}
          ${icon(20, 13, "0 0 20 13", svg`<rect x=".7" y=".7" width="16.300" height="11.600" rx="2.500" stroke-width="1.400"/><path d="M3 3h9v7H3Z" fill="currentColor" stroke="none"/><path d="M18.700 4.300v4.400" stroke-width="2.200"/>`)}
        </div>
        <div class="time"><div>18:22</div><div>24-03-2025</div></div>
      </div>`;
  }
}

@customElement("app-root")
export class AppRoot extends LitElement {
  static styles = css`
    :host { display: flex; flex-direction: column; width: 1920px; height: 1080px; overflow: hidden; }
    .main { display: flex; height: 851px; }
  `;
  render() {
    return html`<browser-chrome></browser-chrome><trello-header></trello-header>
      <div class="main"><workspace-sidebar></workspace-sidebar><board-view></board-view></div>
      <task-bar></task-bar>`;
  }
}
